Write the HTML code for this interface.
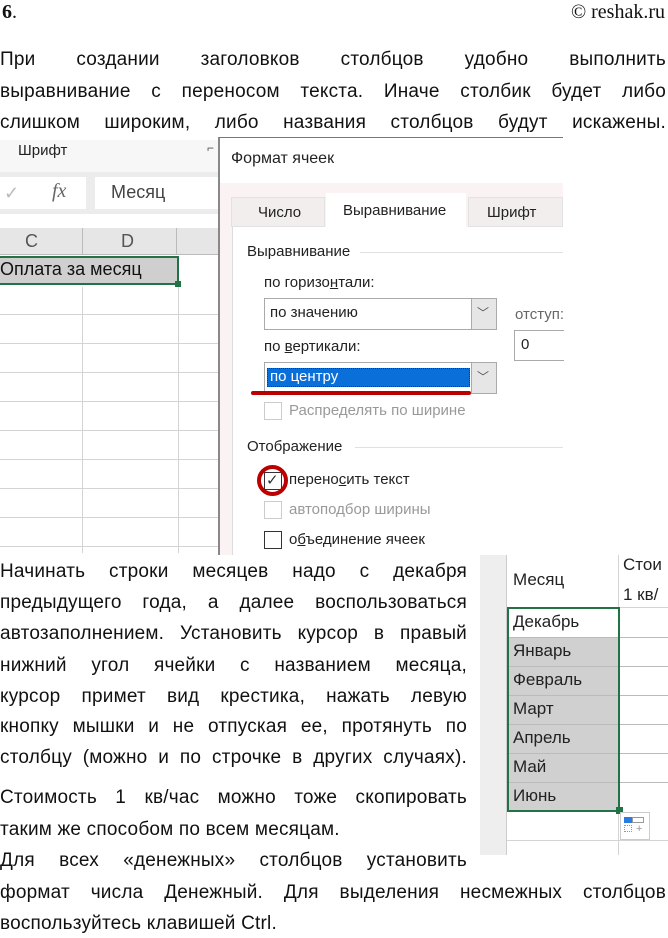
<!DOCTYPE html>
<html><head><meta charset="utf-8"><style>
*{margin:0;padding:0;box-sizing:border-box}
body{width:668px;height:938px;background:#fff;position:relative;overflow:hidden;font-family:"Liberation Sans",sans-serif;color:#111}
.a{position:absolute}
.ln{position:absolute;left:0;height:26px;line-height:26px;font-size:19px;text-align:justify;text-align-last:justify;white-space:nowrap;overflow:visible;letter-spacing:0.2px}
.ln.l{text-align-last:left}
.ui{font-size:15px;color:#222;position:absolute;white-space:nowrap}
.hl{position:absolute;background:#d4d4d4;height:1px}
.vl{position:absolute;background:#d4d4d4;width:1px}
.cb{position:absolute;width:18px;height:18px;border:1px solid #333;background:#fff}
</style></head><body>
<div class="a" style="left:2px;top:1px;font:bold 20px 'Liberation Serif',serif">6<span style="font-weight:normal">.</span></div>
<div class="a" style="right:3px;top:1px;font:20px 'Liberation Serif',serif">© reshak.ru</div>

<div class="ln" style="top:47px;width:666px">При создании заголовков столбцов удобно выполнить</div>
<div class="ln" style="top:79px;width:666px">выравнивание с переносом текста. Иначе столбик будет либо</div>
<div class="ln" style="top:110px;width:666px">слишком широким, либо названия столбцов будут искажены.</div>

<!-- left excel -->
<div class="a" style="left:0;top:140px;width:222px;height:32px;background:#f7f7f7"></div>
<div class="ui" style="left:18px;top:142px;font-size:15px">Шрифт</div>
<div class="ui" style="left:207px;top:141px;font-size:12px;color:#555">⌐</div>
<div class="a" style="left:0;top:172px;width:222px;height:42px;background:#ececec"></div>
<div class="a" style="left:0;top:177px;width:86px;height:32px;background:#fff"></div>
<div class="ui" style="left:4px;top:183px;font-size:18px;color:#bbb">✓</div>
<div class="ui" style="left:52px;top:180px;font:italic 20px 'Liberation Serif',serif;color:#666">fx</div>
<div class="a" style="left:95px;top:177px;width:127px;height:32px;background:#fff"></div>
<div class="ui" style="left:111px;top:182px;font-size:18px;color:#444">Месяц</div>
<div class="a" style="left:0;top:228px;width:222px;height:27px;background:#e6e6e6;border-bottom:1px solid #bbb"></div>
<div class="vl" style="left:82px;top:228px;height:27px;background:#bbb"></div>
<div class="vl" style="left:176px;top:228px;height:27px;background:#bbb"></div>
<div class="ui" style="left:25px;top:231px;font-size:18px;color:#555">C</div>
<div class="ui" style="left:121px;top:231px;font-size:18px;color:#555">D</div>
<div class="a" style="left:0;top:256px;width:179px;height:29px;background:#cfcfcf;border:2px solid #217346;border-left:none"></div>
<div class="a" style="left:175px;top:281px;width:6px;height:6px;background:#217346"></div>
<div class="ui" style="left:0;top:259px;font-size:18px;color:#111">Оплата за месяц</div>
<div class="hl" style="left:0;top:314px;width:220px"></div>
<div class="hl" style="left:0;top:343px;width:220px"></div>
<div class="hl" style="left:0;top:372px;width:220px"></div>
<div class="hl" style="left:0;top:401px;width:220px"></div>
<div class="hl" style="left:0;top:430px;width:220px"></div>
<div class="hl" style="left:0;top:459px;width:220px"></div>
<div class="hl" style="left:0;top:488px;width:220px"></div>
<div class="hl" style="left:0;top:517px;width:220px"></div>
<div class="hl" style="left:0;top:546px;width:220px"></div>
<div class="vl" style="left:82px;top:287px;height:266px"></div>
<div class="vl" style="left:178px;top:287px;height:266px"></div>

<!-- dialog -->
<div class="a" style="left:218px;top:137px;width:345px;height:418px;background:#fbf3f3;border-left:2px solid #888;border-top:1px solid #777"></div>
<div class="a" style="left:220px;top:138px;width:343px;height:45px;background:#fff"></div>
<div class="ui" style="left:231px;top:150px;font-size:16px">Формат ячеек</div>
<div class="a" style="left:231px;top:197px;width:94px;height:30px;background:#f2eeee;border:1px solid #e2e2e2"></div>
<div class="ui" style="left:258px;top:204px">Число</div>
<div class="a" style="left:326px;top:193px;width:140px;height:36px;background:#fff"></div>
<div class="ui" style="left:343px;top:202px">Выравнивание</div>
<div class="a" style="left:468px;top:197px;width:95px;height:30px;background:#f2eeee;border:1px solid #e2e2e2"></div>
<div class="ui" style="left:487px;top:204px">Шрифт</div>
<div class="a" style="left:232px;top:227px;width:331px;height:328px;background:#fff;border-left:1px solid #ddd"></div>
<div class="ui" style="left:247px;top:243px">Выравнивание</div>
<div class="hl" style="left:360px;top:252px;width:203px;background:#e0e0e0"></div>
<div class="ui" style="left:264px;top:274px">по горизо<u>н</u>тали:</div>
<div class="a" style="left:264px;top:298px;width:233px;height:32px;border:1px solid #aaa;background:#fff"></div>
<div class="a" style="left:471px;top:299px;width:25px;height:30px;background:#e6e6e6;border-left:1px solid #aaa"></div>
<div class="ui" style="left:477px;top:304px;font-size:12px;color:#555">﹀</div>
<div class="ui" style="left:270px;top:304px">по значению</div>
<div class="ui" style="left:515px;top:306px;color:#666">отступ:</div>
<div class="a" style="left:514px;top:330px;width:50px;height:31px;border:1px solid #aaa;border-right:none;background:#fff"></div>
<div class="ui" style="left:521px;top:336px">0</div>
<div class="ui" style="left:264px;top:338px">по <u>в</u>ертикали:</div>
<div class="a" style="left:264px;top:362px;width:233px;height:32px;border:1px solid #aaa;background:#fff"></div>
<div class="a" style="left:267px;top:368px;width:203px;height:19px;background:#0a6fd8;border:1px dotted #333"></div>
<div class="ui" style="left:270px;top:368px;color:#fff">по центру</div>
<div class="a" style="left:471px;top:363px;width:25px;height:30px;background:#e6e6e6;border-left:1px solid #aaa"></div>
<div class="ui" style="left:477px;top:368px;font-size:12px;color:#555">﹀</div>
<div class="a" style="left:251px;top:391px;width:220px;height:4px;background:#b00;border-radius:2px"></div>
<div class="cb" style="left:264px;top:402px;border-color:#ccc"></div>
<div class="ui" style="left:289px;top:402px;color:#999">Распределять по ширине</div>
<div class="ui" style="left:247px;top:438px">Отображение</div>
<div class="hl" style="left:355px;top:447px;width:208px;background:#e0e0e0"></div>
<div class="cb" style="left:264px;top:472px"></div>
<div class="ui" style="left:266px;top:471px;font-size:15px;color:#333">✓</div>
<div class="a" style="left:257px;top:465px;width:31px;height:31px;border:4px solid #b00;border-radius:50%"></div>
<div class="ui" style="left:289px;top:471px">перено<u>с</u>ить текст</div>
<div class="cb" style="left:264px;top:501px;border-color:#ccc"></div>
<div class="ui" style="left:289px;top:501px;color:#999">автоподбор ширины</div>
<div class="cb" style="left:264px;top:531px"></div>
<div class="ui" style="left:289px;top:531px">о<u>б</u>ъединение ячеек</div>

<!-- bottom text -->
<div class="ln" style="top:559px;width:467px">Начинать строки месяцев надо с декабря</div>
<div class="ln" style="top:590px;width:467px">предыдущего года, а далее воспользоваться</div>
<div class="ln" style="top:621px;width:467px">автозаполнением. Установить курсор в правый</div>
<div class="ln" style="top:653px;width:467px">нижний угол ячейки с названием месяца,</div>
<div class="ln" style="top:684px;width:467px">курсор примет вид крестика, нажать левую</div>
<div class="ln" style="top:714px;width:467px">кнопку мышки и не отпуская ее, протянуть по</div>
<div class="ln" style="top:745px;width:467px">столбцу (можно и по строчке в других случаях).</div>
<div class="ln" style="top:785px;width:467px">Стоимость 1 кв/час можно тоже скопировать</div>
<div class="ln l" style="top:817px;width:467px">таким же способом по всем месяцам.</div>
<div class="ln" style="top:848px;width:467px">Для всех «денежных» столбцов установить</div>
<div class="ln" style="top:880px;width:666px">формат числа Денежный. Для выделения несмежных столбцов</div>
<div class="ln l" style="top:911px;width:467px">воспользуйтесь клавишей Ctrl.</div>

<!-- right sheet -->
<div class="a" style="left:480px;top:555px;width:27px;height:300px;background:#eee;border-right:1px solid #ccc"></div>
<div class="vl" style="left:618px;top:555px;height:300px"></div>
<div class="hl" style="left:507px;top:607px;width:161px"></div>
<div class="ui" style="left:513px;top:570px;font-size:17px">Месяц</div>
<div class="ui" style="left:623px;top:555px;font-size:17px">Стои</div>
<div class="ui" style="left:623px;top:585px;font-size:17px">1 кв/</div>
<div class="a" style="left:507px;top:637px;width:112px;height:174px;background:#d0d0d0"></div>
<div class="hl" style="left:507px;top:666px;width:161px;background:#bbb"></div>
<div class="hl" style="left:507px;top:695px;width:161px;background:#bbb"></div>
<div class="hl" style="left:507px;top:724px;width:161px;background:#bbb"></div>
<div class="hl" style="left:507px;top:753px;width:161px;background:#bbb"></div>
<div class="hl" style="left:507px;top:782px;width:161px;background:#bbb"></div>
<div class="hl" style="left:507px;top:637px;width:161px;background:#bbb"></div>
<div class="hl" style="left:507px;top:840px;width:161px"></div>
<div class="a" style="left:507px;top:607px;width:113px;height:205px;border:2px solid #217346"></div>
<div class="a" style="left:616px;top:807px;width:7px;height:7px;background:#217346"></div>
<div class="ui" style="left:513px;top:612px;font-size:17px">Декабрь</div>
<div class="ui" style="left:513px;top:641px;font-size:17px">Январь</div>
<div class="ui" style="left:513px;top:670px;font-size:17px">Февраль</div>
<div class="ui" style="left:513px;top:699px;font-size:17px">Март</div>
<div class="ui" style="left:513px;top:728px;font-size:17px">Апрель</div>
<div class="ui" style="left:513px;top:757px;font-size:17px">Май</div>
<div class="ui" style="left:513px;top:786px;font-size:17px">Июнь</div>
<div class="a" style="left:620px;top:812px;width:30px;height:28px;border:1px solid #ccc;background:#fff"></div>
<div class="a" style="left:624px;top:817px;width:8px;height:6px;background:#2a7be4"></div>
<div class="a" style="left:632px;top:817px;width:12px;height:6px;border:1px solid #999"></div>
<div class="a" style="left:624px;top:825px;width:8px;height:7px;border:1px dotted #999"></div>
<div class="ui" style="left:636px;top:823px;font-size:11px;color:#999">+</div>
</body></html>
